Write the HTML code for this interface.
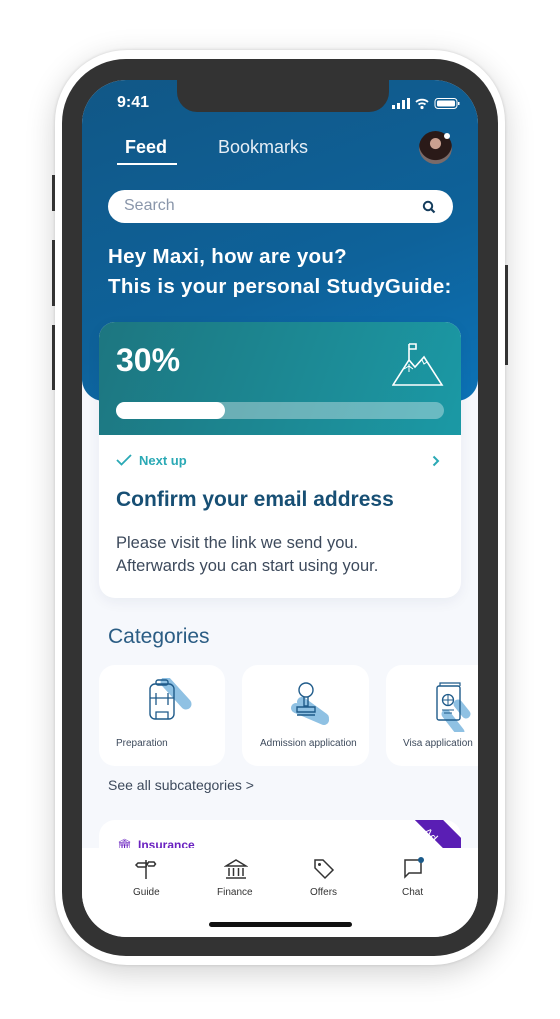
<!DOCTYPE html>
<html><head><meta charset="utf-8"><style>
*{margin:0;padding:0;box-sizing:border-box}
body{width:560px;height:1019px;background:#fff;position:relative;overflow:hidden;font-family:"Liberation Sans",sans-serif}
.abs{position:absolute}
.body{left:55px;top:50px;width:450px;height:915px;border-radius:72px;background:#fff;box-shadow:0 8px 30px rgba(0,0,0,.18),0 0 3px rgba(0,0,0,.15)}
.bezel{left:62px;top:59px;width:436px;height:897px;border-radius:64px;background:#333}
.screen{left:82px;top:80px;width:396px;height:857px;border-radius:44px;background:#f6f8fc;overflow:hidden}
.btn{background:#333;width:3px}
.hdr{left:0;top:0;width:396px;height:321px;border-radius:0 0 22px 22px;background:linear-gradient(160deg,#115786 0%,#0e629a 60%,#0c72b6 100%)}
.notch{left:95px;top:0;width:212px;height:32px;background:#333;border-radius:0 0 20px 20px}
.w{color:#fff}
</style></head><body>
<div class="abs body"></div>
<div class="abs btn" style="left:52px;top:175px;height:36px"></div>
<div class="abs btn" style="left:52px;top:240px;height:66px"></div>
<div class="abs btn" style="left:52px;top:325px;height:65px"></div>
<div class="abs btn" style="left:505px;top:265px;height:100px"></div>
<div class="abs bezel"></div>
<div class="abs screen">
 <div class="abs hdr"></div>
 <div class="abs notch"></div>
 <div class="abs w" style="left:35px;top:14px;font-size:16px;font-weight:bold">9:41</div>
 <svg class="abs" style="left:310px;top:17px" width="70" height="14" viewBox="0 0 70 14">
  <rect x="0" y="8" width="3" height="4" fill="#fff"/><rect x="5" y="6" width="3" height="6" fill="#fff"/><rect x="10" y="3" width="3" height="9" fill="#fff"/><rect x="15" y="1" width="3" height="11" fill="#fff"/>
  <path d="M24 5a9 9 0 0 1 12 0M26.5 7.5a5.5 5.5 0 0 1 7 0" stroke="#fff" stroke-width="1.8" fill="none"/><circle cx="30" cy="10.5" r="1.6" fill="#fff"/>
  <rect x="43" y="1.5" width="22" height="10" rx="3" stroke="#fff" stroke-width="1" fill="none"/><rect x="45" y="3.5" width="18" height="6" rx="1.5" fill="#fff"/><rect x="66" y="5" width="1.5" height="3" fill="#fff"/>
 </svg>
 <div class="abs w" style="left:43px;top:57px;font-size:18px;font-weight:bold">Feed</div>
 <div class="abs" style="left:35px;top:83px;width:60px;height:2px;background:#fff"></div>
 <div class="abs" style="left:136px;top:57px;font-size:18px;color:#e6eef6">Bookmarks</div>
 <div class="abs" style="left:337px;top:51px;width:33px;height:33px;border-radius:50%;background:radial-gradient(circle at 50% 38%,#c9a090 0 20%,#2a1a18 22% 62%,#7a6a68 64%)"></div>
 <div class="abs" style="left:362px;top:53px;width:6px;height:6px;border-radius:50%;background:#fff"></div>
 <div class="abs" style="left:26px;top:110px;width:345px;height:33px;border-radius:17px;background:#fff"></div>
 <div class="abs" style="left:42px;top:117px;font-size:16px;color:#8a96aa">Search</div>
 <svg class="abs" style="left:340px;top:120px" width="14" height="14" viewBox="0 0 14 14"><circle cx="6" cy="6" r="4.2" stroke="#143c5c" stroke-width="2" fill="none"/><path d="M9 9l3.5 3.5" stroke="#143c5c" stroke-width="2.2"/></svg>
 <div class="abs w" style="left:26px;top:162px;font-size:20.5px;font-weight:bold;line-height:30px;letter-spacing:.3px">Hey Maxi, how are you?<br>This is your personal StudyGuide:</div>
 <div class="abs" style="left:17px;top:242px;width:362px;height:276px;border-radius:16px;background:#fff;box-shadow:0 4px 14px rgba(20,40,80,.06);overflow:hidden">
  <div class="abs" style="left:0;top:0;width:362px;height:113px;background:linear-gradient(110deg,#1d7680,#1b99a5)"></div>
  <div class="abs w" style="left:17px;top:20px;font-size:32px;font-weight:bold">30%</div>
  <svg class="abs" style="left:293px;top:20px" width="52" height="46" viewBox="0 0 52 46"><path d="M1 43L17 18 23 25 32 15 50 43Z M17 18V2 M17 2h7v5h-7" stroke="#fff" stroke-width="1.6" fill="none"/><path d="M17 22v8M12 27l5-3 4 3M30 18l2 4 3-2" stroke="#fff" stroke-width="1" fill="none"/></svg>
  <div class="abs" style="left:17px;top:80px;width:328px;height:17px;border-radius:9px;background:rgba(255,255,255,.35)"></div>
  <div class="abs" style="left:17px;top:80px;width:109px;height:17px;border-radius:9px;background:#fff"></div>
  <svg class="abs" style="left:17px;top:132px" width="16" height="12" viewBox="0 0 16 12"><path d="M1 6l4.5 4.5L15 1" stroke="#2aa9b5" stroke-width="1.8" fill="none"/></svg>
  <div class="abs" style="left:40px;top:131px;font-size:13px;font-weight:bold;color:#2aa9b5">Next up</div>
  <svg class="abs" style="left:333px;top:133px" width="8" height="12" viewBox="0 0 8 12"><path d="M1.5 1.5L6 6l-4.5 4.5" stroke="#2aa9b5" stroke-width="2" fill="none"/></svg>
  <div class="abs" style="left:17px;top:166px;font-size:21px;font-weight:bold;color:#174f74">Confirm your email address</div>
  <div class="abs" style="left:17px;top:210px;font-size:16.5px;color:#3d4a5c;line-height:23px">Please visit the link we send you.<br>Afterwards you can start using your.</div>
 </div>
 <div class="abs" style="left:26px;top:545px;font-size:21px;color:#2b5d84">Categories</div>
 <div class="abs" style="left:17px;top:585px;width:126px;height:101px;border-radius:16px;background:#fff"></div>
 <div class="abs" style="left:160px;top:585px;width:127px;height:101px;border-radius:16px;background:#fff"></div>
 <div class="abs" style="left:304px;top:585px;width:110px;height:101px;border-radius:16px 0 0 16px;background:#fff"></div>
 <svg class="abs" style="left:62px;top:598px" width="50" height="45" viewBox="0 0 50 45"><path d="M22 4l20 22" stroke="#8fc1e3" stroke-width="11" stroke-linecap="round"/><rect x="6" y="6" width="24" height="35" rx="5" stroke="#1f5b8a" stroke-width="1.4" fill="none"/><rect x="12" y="2" width="12" height="5" rx="2" stroke="#1f5b8a" stroke-width="1.4" fill="none"/><path d="M6 20h24M12 15v12M24 15v12M12 41v-7h12v7" stroke="#1f5b8a" stroke-width="1.3" fill="none"/></svg>
 <svg class="abs" style="left:206px;top:600px" width="50" height="45" viewBox="0 0 50 45"><path d="M8 28l28 12" stroke="#8fc1e3" stroke-width="10" stroke-linecap="round"/><path d="M14 22l22 16" stroke="#8fc1e3" stroke-width="10" stroke-linecap="round"/><circle cx="18" cy="10" r="7" stroke="#1f5b8a" stroke-width="1.4" fill="none"/><path d="M16 17v9h4v-9M9 27h18v5H9zM9 35h18" stroke="#1f5b8a" stroke-width="1.4" fill="none"/></svg>
 <svg class="abs" style="left:350px;top:602px" width="45" height="50" viewBox="0 0 45 50"><path d="M14 32l14 18" stroke="#8fc1e3" stroke-width="9" stroke-linecap="round"/><path d="M26 22l8 10" stroke="#8fc1e3" stroke-width="9" stroke-linecap="round"/><rect x="5" y="4" width="23" height="34" rx="2" stroke="#1f5b8a" stroke-width="1.4" fill="none"/><path d="M8 4V1h20v3" stroke="#1f5b8a" stroke-width="1.2" fill="none"/><circle cx="16" cy="18" r="5.5" stroke="#1f5b8a" stroke-width="1.3" fill="none"/><path d="M10.5 18h11M16 12.5v11M10 28h12M12 31h8" stroke="#1f5b8a" stroke-width="1" fill="none"/></svg>
 <div class="abs" style="left:34px;top:658px;font-size:10px;color:#3d4a5c">Preparation</div>
 <div class="abs" style="left:178px;top:658px;font-size:10px;color:#3d4a5c">Admission application</div>
 <div class="abs" style="left:321px;top:658px;font-size:10px;color:#3d4a5c">Visa application</div>
 <div class="abs" style="left:26px;top:697px;font-size:14px;color:#3d4a5c">See all subcategories &gt;</div>
 <div class="abs" style="left:17px;top:740px;width:362px;height:60px;border-radius:16px;background:#fff;overflow:hidden">
  <div class="abs" style="left:300px;top:10px;width:100px;height:20px;background:#5a1eb4;transform:rotate(45deg)"></div>
  <div class="abs" style="left:324px;top:8px;font-size:12px;color:#fff;transform:rotate(45deg)">Ad</div>
  <div class="abs" style="left:18px;top:18px;font-size:12px;color:#6a22c0">&#x1F3DB;</div>
  <div class="abs" style="left:39px;top:18px;font-size:12px;font-weight:bold;color:#6a22c0">Insurance</div>
 </div>
 <div class="abs" style="left:0;top:768px;width:396px;height:89px;background:#fff"></div>
 <svg class="abs" style="left:52px;top:777px" width="24" height="24" viewBox="0 0 24 24"><path d="M12 3v19M4 6h10l-2 4H4l-2-2zM14 5h6l1.5 2L20 9h-6" stroke="#333" stroke-width="1.5" fill="none"/></svg>
 <svg class="abs" style="left:142px;top:777px" width="24" height="24" viewBox="0 0 24 24"><path d="M2 9L12 3l10 6zM2 9h20M5 11v8M9.5 11v8M14.5 11v8M19 11v8M2 21h20" stroke="#333" stroke-width="1.5" fill="none"/></svg>
 <svg class="abs" style="left:230px;top:777px" width="24" height="24" viewBox="0 0 24 24"><path d="M3 3h8l10 10-8 8L3 11z" stroke="#333" stroke-width="1.5" fill="none"/><circle cx="7.5" cy="7.5" r="1.5" fill="#333"/></svg>
 <svg class="abs" style="left:319px;top:777px" width="26" height="24" viewBox="0 0 26 24"><path d="M4 3h16v13H8l-4 4z" stroke="#333" stroke-width="1.5" fill="none"/><circle cx="20" cy="3" r="3" fill="#1a5a8a"/></svg>
 <div class="abs" style="left:51px;top:807px;font-size:10px;color:#333">Guide</div>
 <div class="abs" style="left:135px;top:807px;font-size:10px;color:#333">Finance</div>
 <div class="abs" style="left:228px;top:807px;font-size:10px;color:#333">Offers</div>
 <div class="abs" style="left:320px;top:807px;font-size:10px;color:#333">Chat</div>
 <div class="abs" style="left:127px;top:842px;width:143px;height:5px;border-radius:3px;background:#111"></div>
</div>
</body></html>
